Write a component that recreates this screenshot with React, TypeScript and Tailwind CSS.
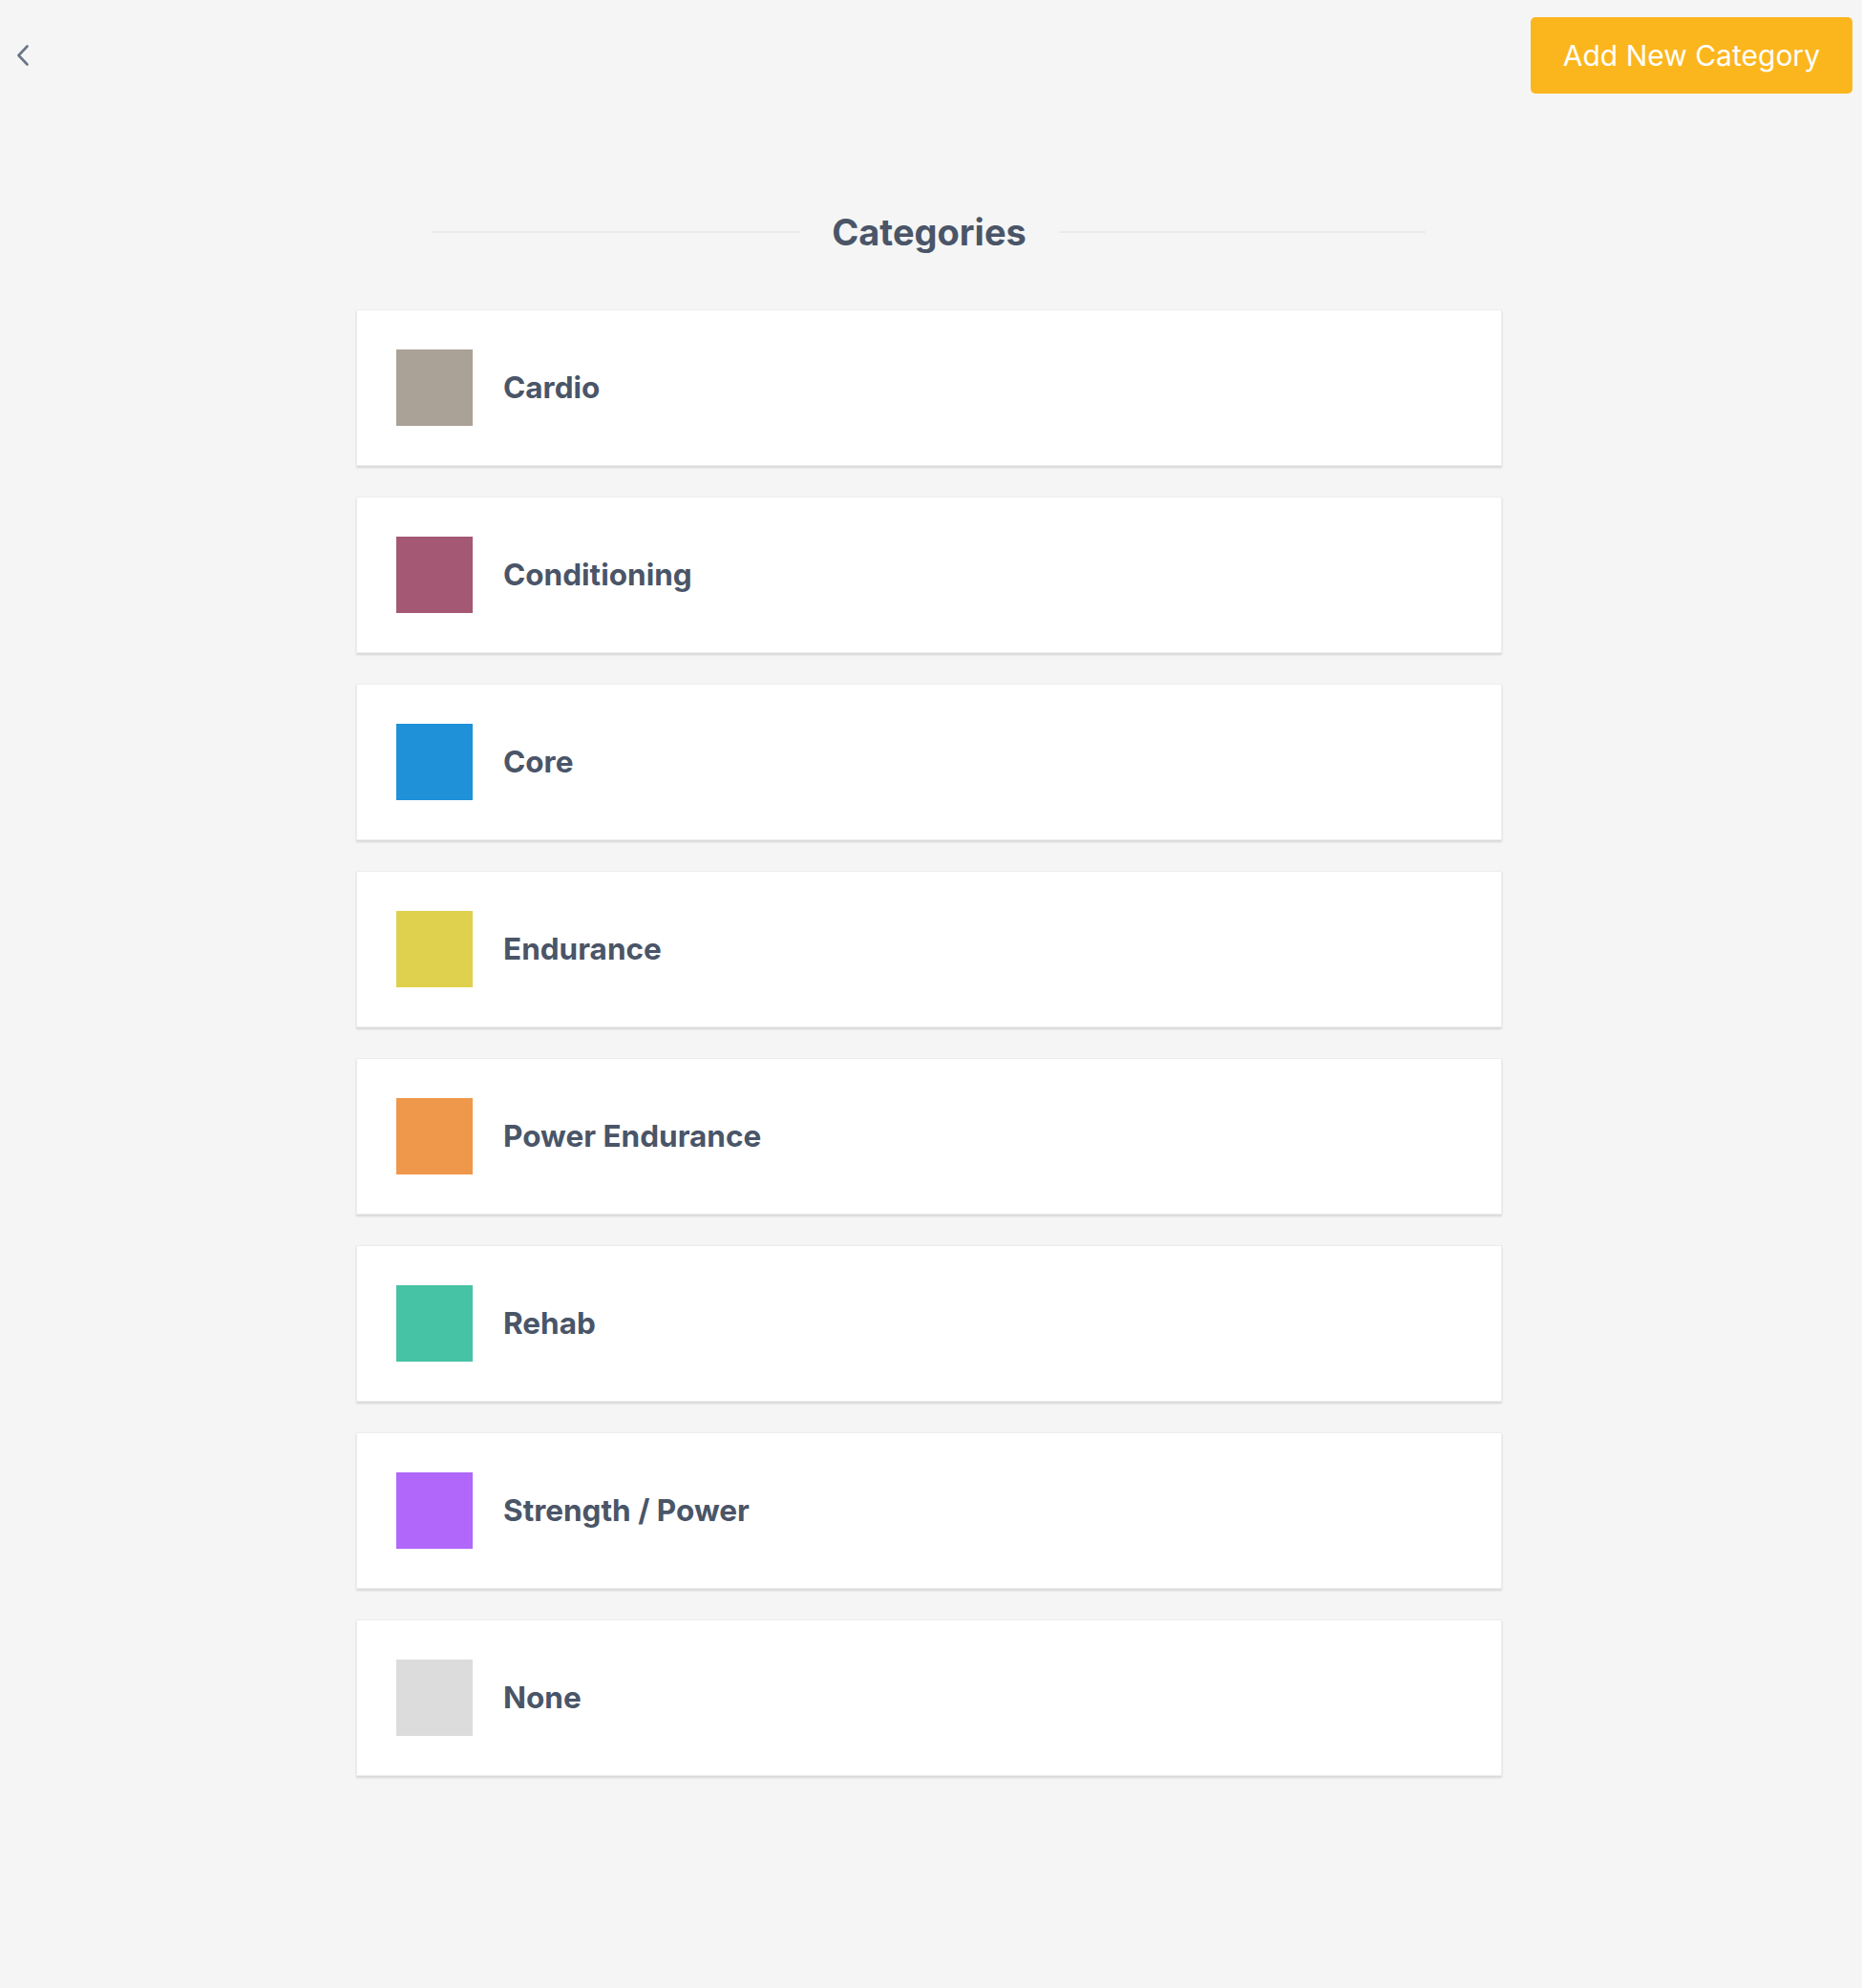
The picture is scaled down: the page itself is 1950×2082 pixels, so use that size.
import { useState } from 'react'

const categories = [
  { id: 1, name: 'Cardio', color: '#aaa197' },
  { id: 2, name: 'Conditioning', color: '#a55874' },
  { id: 3, name: 'Core', color: '#1e91d8' },
  { id: 4, name: 'Endurance', color: '#dfd14e' },
  { id: 5, name: 'Power Endurance', color: '#ef974b' },
  { id: 6, name: 'Rehab', color: '#45c3a4' },
  { id: 7, name: 'Strength / Power', color: '#b067fa' },
  { id: 8, name: 'None', color: '#dcdcdc' },
]

function BackChevron() {
  return (
    <svg width="14" height="22" viewBox="0 0 14 22" fill="none" className="text-[#6b7587]">
      <polyline points="11.5,1.5 2.5,11 11.5,20.5" stroke="currentColor" strokeWidth="2.6" strokeLinecap="round" strokeLinejoin="round" />
    </svg>
  )
}

export default function App() {
  const [selected, setSelected] = useState<number | null>(null)

  return (
    <div className="min-h-screen bg-[#f5f5f5] pb-[200px] font-['Inter','Noto_Sans',sans-serif]">
      {/* Top bar */}
      <div className="flex items-start justify-between pl-[17px] pr-[10px] pt-[18px]">
        <button className="mt-[29px] cursor-pointer">
          <BackChevron />
        </button>
        <button className="h-[80px] rounded-[5px] bg-[#fcb61d] px-[34px] text-[30px] text-white">
          Add New Category
        </button>
      </div>

      <div className="mx-auto w-[1200px] -translate-x-[2px]">
        {/* Heading */}
        <div className="mx-auto mt-[122px] flex w-[1040px] items-center">
          <div className="h-[2px] flex-1 bg-[#eaeaea]" />
          <h2 className="px-[34px] text-[38px] leading-[46px] font-bold text-[#4a5568]">Categories</h2>
          <div className="h-[2px] flex-1 bg-[#eaeaea]" />
        </div>

        {/* List */}
        <div className="mt-[58px] flex flex-col gap-[32px]">
          {categories.map((category) => (
            <div
              key={category.id}
              onClick={() => setSelected(category.id)}
              className={`flex items-center gap-[32px] border border-[#ececec] bg-white p-[41px] shadow-[0_2px_2px_rgba(0,0,0,0.12)] ${
                selected === category.id ? 'ring-2 ring-[#fcb61d]' : ''
              }`}
            >
              <div className="h-[80px] w-[80px]" style={{ backgroundColor: category.color }} />
              <span className="text-[31.5px] font-bold text-[#4a5568]">{category.name}</span>
            </div>
          ))}
        </div>
      </div>
    </div>
  )
}
